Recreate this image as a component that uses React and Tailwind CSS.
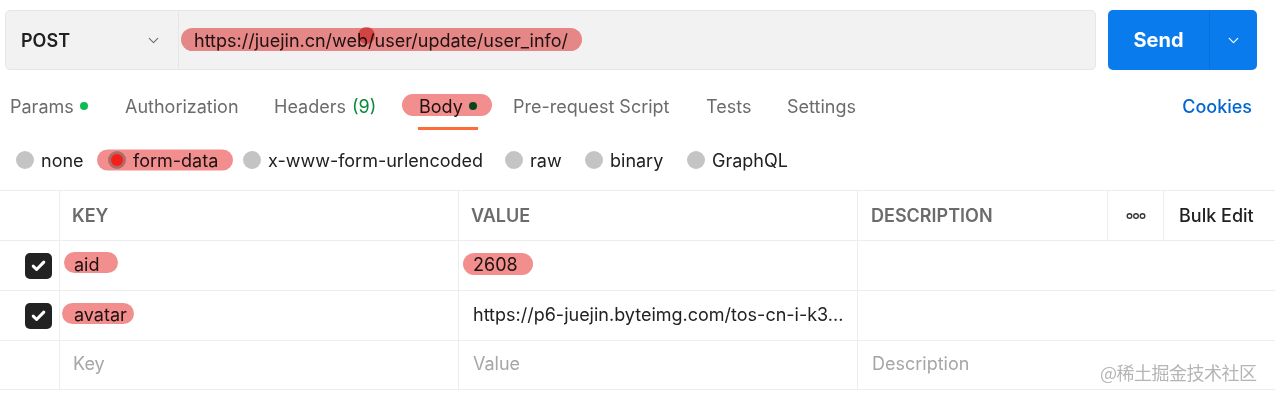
import { ChevronDown } from "lucide-react";

/** Marker-style highlight drawn over text */
function Mark({ className = "" }) {
  return (
    <span
      className={`absolute rounded-full bg-[#f28e8e] mix-blend-multiply pointer-events-none ${className}`}
    />
  );
}

function Check() {
  return (
    <div className="w-[27px] h-[26px] rounded-[5px] bg-[#222222] flex items-center justify-center">
      <svg width="17" height="17" viewBox="0 0 16 16" fill="none">
        <path d="M3 8.6l3.2 3.2L13 4.8" stroke="white" strokeWidth="2.8" strokeLinecap="round" strokeLinejoin="round" />
      </svg>
    </div>
  );
}

function Radio({ label, className = "" }) {
  return (
    <div className={`flex items-center gap-[7px] ${className}`}>
      <span className="w-[18px] h-[18px] rounded-full bg-[#c4c4c4]" />
      <span>{label}</span>
    </div>
  );
}

const tabs = [
  { label: "Params", w: "w-[115px]", dot: "bg-[#0cbb52]" },
  { label: "Authorization", w: "w-[149px]" },
  { label: "Headers", w: "w-[145px]", count: "(9)" },
  { label: "Body", w: "w-[94px]", dot: "bg-[#0a7a35]", active: true },
  { label: "Pre-request Script", w: "w-[193px]" },
  { label: "Tests", w: "w-[81px]" },
  { label: "Settings", w: "w-[120px]" },
];

export default function App() {
  return (
    <div className="relative w-[1275px] h-[395px] bg-white overflow-hidden text-[#212121] font-['Inter','Noto_Sans',sans-serif]">
      {/* ── URL bar + Send ─────────────────────────────── */}
      <div className="flex pt-[10px] pl-[5px] gap-[12px]">
        <div className="flex w-[1091px] h-[60px] rounded-[5px] bg-[#f2f2f2] border border-[#e6e6e6]">
          <div className="w-[173px] flex items-center justify-between pl-[15px] pr-[16px] border-r border-[#e6e6e6]">
            <span className="text-[18px] font-semibold">POST</span>
            <ChevronDown size={17} strokeWidth={1.5} className="text-[#6b6b6b]" />
          </div>
          <div className="relative flex items-center pl-[15px] text-[18px]">
            <span>https://juejin.cn/web/user/update/user_info/</span>
            <Mark className="left-[2px] right-[-14px] top-[17px] h-[23px]" />
            <span className="absolute left-[179px] top-[16px] w-[17px] h-[17px] rounded-full bg-[#e04a4a] mix-blend-multiply opacity-70" />
          </div>
        </div>
        <div className="flex w-[149px] h-[60px] rounded-[5px] bg-[#097bed] text-white">
          <div className="w-[102px] flex items-center justify-center text-[20px] font-bold border-r border-[#0a6fd8]">
            Send
          </div>
          <div className="flex-1 flex items-center justify-center">
            <ChevronDown size={17} strokeWidth={1.75} />
          </div>
        </div>
      </div>

      {/* ── Tabs ───────────────────────────────────────── */}
      <div className="flex items-stretch h-[48px] mt-[12px] pl-[10px] pr-[23px] text-[18px] text-[#6b6b6b]">
        {tabs.map((t) => (
          <div key={t.label} className={`${t.w} shrink-0 flex items-center`}>
            <div className="relative flex items-center h-full">
              <span className={t.active ? "text-[#212121]" : ""}>{t.label}</span>
              {t.count && <span className="ml-[6px] text-[#0a8a3d]">{t.count}</span>}
              {t.dot && <span className={`ml-[6px] w-[8px] h-[8px] rounded-full ${t.dot}`} />}
              {t.active && (
                <>
                  <Mark className="left-[-17px] right-[-15px] top-[12px] h-[22px]" />
                  <span className="absolute left-[-1px] right-[-1px] bottom-[0px] h-[3px] bg-[#ff6c37]" />
                </>
              )}
            </div>
          </div>
        ))}
        <div className="ml-auto flex items-center text-[#0265d2] font-medium">Cookies</div>
      </div>

      {/* ── Body type radios ───────────────────────────── */}
      <div className="flex items-center h-[60px] pl-[16px] text-[18px]">
        <Radio label="none" className="w-[81px]" />
        <div className="relative flex items-center gap-[7px] w-[146px] pl-[11px]">
          <span className="w-[18px] h-[18px] rounded-full bg-[#bcbcbc] flex items-center justify-center">
            <span className="w-[12px] h-[12px] rounded-full bg-[#ff3b2a]" />
          </span>
          <span>form-data</span>
          <Mark className="left-[0px] w-[136px] top-1/2 -translate-y-1/2 h-[21px]" />
        </div>
        <Radio label="x-www-form-urlencoded" className="w-[262px]" />
        <Radio label="raw" className="w-[80px]" />
        <Radio label="binary" className="w-[102px]" />
        <Radio label="GraphQL" />
      </div>

      {/* ── Params table ───────────────────────────────── */}
      <div className="border-t border-b border-[#ededed] text-[18px]">
        <div className="grid grid-cols-[59px_399px_399px_250px_56px_1fr] h-[50px] border-b border-[#ededed]">
          <div />
          <div className="border-l border-[#ededed] flex items-center pl-[12px] font-semibold text-[#6b6b6b]">KEY</div>
          <div className="border-l border-[#ededed] flex items-center pl-[12px] font-semibold text-[#6b6b6b]">VALUE</div>
          <div className="border-l border-[#ededed] flex items-center pl-[13px] font-semibold text-[#6b6b6b]">DESCRIPTION</div>
          <div className="border-l border-[#ededed] flex items-center justify-center">
            <svg width="20" height="8" viewBox="0 0 20 8" fill="none" stroke="#3a3a3a" strokeWidth="1.4">
              <circle cx="3.5" cy="4" r="2.3" />
              <circle cx="10" cy="4" r="2.3" />
              <circle cx="16.5" cy="4" r="2.3" />
            </svg>
          </div>
          <div className="border-l border-[#ededed] flex items-center pl-[15px] font-medium">Bulk Edit</div>
        </div>

        <div className="grid grid-cols-[59px_399px_399px_1fr] h-[50px] border-b border-[#ededed]">
          <div className="flex items-center justify-end pr-[7px]"><Check /></div>
          <div className="border-l border-[#ededed] flex items-center pl-[14px] pb-[2px]">
            <span className="relative">
              aid
              <Mark className="left-[-10px] right-[-18px] top-[1px] h-[21px]" />
            </span>
          </div>
          <div className="border-l border-[#ededed] flex items-center pl-[14px] pb-[2px]">
            <span className="relative">
              2608
              <Mark className="left-[-10px] right-[-15px] top-[2px] h-[22px]" />
            </span>
          </div>
          <div className="border-l border-[#ededed]" />
        </div>

        <div className="grid grid-cols-[59px_399px_399px_1fr] h-[50px] border-b border-[#ededed]">
          <div className="flex items-center justify-end pr-[7px]"><Check /></div>
          <div className="border-l border-[#ededed] flex items-center pl-[14px] pb-[2px]">
            <span className="relative">
              avatar
              <Mark className="left-[-12px] right-[-7px] top-[2px] h-[21px]" />
            </span>
          </div>
          <div className="border-l border-[#ededed] flex items-center pl-[14px] pb-[2px]">
            https://p6-juejin.byteimg.com/tos-cn-i-k3...
          </div>
          <div className="border-l border-[#ededed]" />
        </div>

        <div className="grid grid-cols-[59px_399px_399px_1fr] h-[48px] text-[#a6a6a6]">
          <div />
          <div className="border-l border-[#ededed] flex items-center pl-[13px] pb-[4px]">Key</div>
          <div className="border-l border-[#ededed] flex items-center pl-[14px] pb-[4px]">Value</div>
          <div className="border-l border-[#ededed] flex items-center pl-[14px] pb-[4px]">Description</div>
        </div>
      </div>

      {/* watermark */}
      <div className="absolute left-[1100px] top-[359px] text-[18px] text-[#b5b5b5] font-['Noto_Sans_CJK_SC',sans-serif] tracking-[-0.5px]">
        @稀土掘金技术社区
      </div>
    </div>
  );
}
